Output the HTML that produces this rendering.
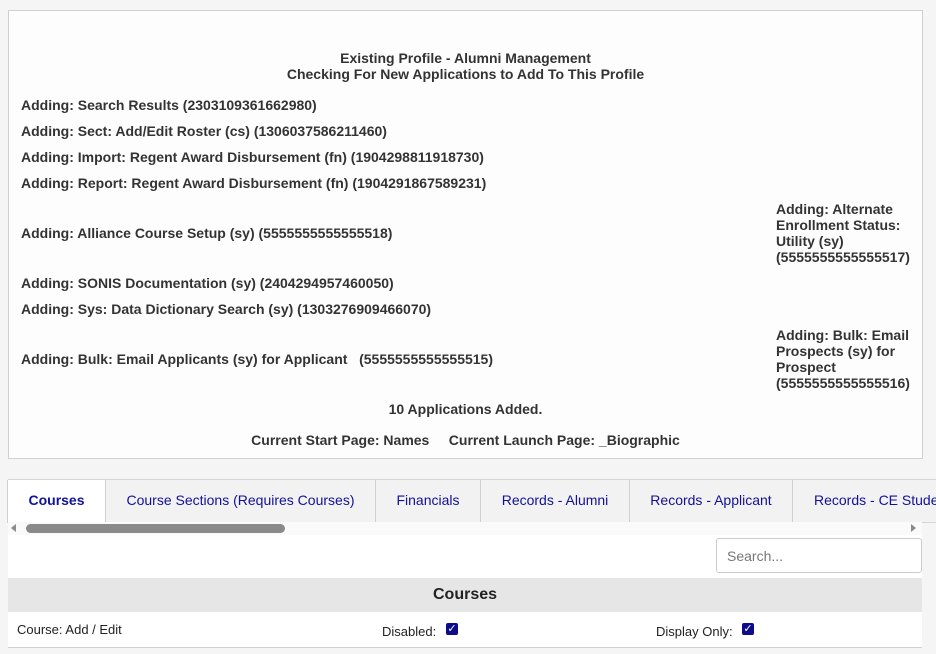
<!DOCTYPE html>
<html><head><style>
body{margin:0;background:#f5f5f5;font-family:"Liberation Sans",Arial,sans-serif;width:936px;height:654px;overflow:hidden;position:relative}
.p{position:absolute;left:8px;top:10px;width:913px;height:447px;background:#fdfdfd;border:1px solid #d0d0d0}
.t{position:absolute;font-size:14px;font-weight:bold;color:#333;line-height:16px;white-space:nowrap;margin-top:-1px}
.c{left:0;width:913px;text-align:center}
.tabs{position:absolute;left:8px;top:479px;width:928px;height:42px;border-top:1px solid #d5d5d5;border-bottom:1px solid #d5d5d5;background:#f2f2f2}
.tab{position:absolute;top:0;height:42px;line-height:41px;font-size:14px;text-align:center;border-right:1px solid #d0d0d0;white-space:nowrap;overflow:hidden;color:#11119a}
</style></head><body>
<div class="p">
<div class="t c" style="top:40px">Existing Profile - Alumni Management</div>
<div class="t c" style="top:56px">Checking For New Applications to Add To This Profile</div>
<div class="t" style="left:12px;top:87px">Adding: Search Results (2303109361662980)</div>
<div class="t" style="left:12px;top:113px">Adding: Sect: Add/Edit Roster (cs) (1306037586211460)</div>
<div class="t" style="left:12px;top:139px">Adding: Import: Regent Award Disbursement (fn) (1904298811918730)</div>
<div class="t" style="left:12px;top:165px">Adding: Report: Regent Award Disbursement (fn) (1904291867589231)</div>
<div class="t" style="left:12px;top:215px">Adding: Alliance Course Setup (sy) (5555555555555518)</div>
<div class="t" style="left:767px;top:191px">Adding: Alternate<br>Enrollment Status:<br>Utility (sy)<br>(5555555555555517)</div>
<div class="t" style="left:12px;top:265px">Adding: SONIS Documentation (sy) (2404294957460050)</div>
<div class="t" style="left:12px;top:291px">Adding: Sys: Data Dictionary Search (sy) (1303276909466070)</div>
<div class="t" style="left:12px;top:341px">Adding: Bulk: Email Applicants (sy) for Applicant &nbsp; (5555555555555515)</div>
<div class="t" style="left:767px;top:317px">Adding: Bulk: Email<br>Prospects (sy) for<br>Prospect<br>(5555555555555516)</div>
<div class="t c" style="top:391px">10 Applications Added.</div>
<div class="t c" style="top:422px">Current Start Page: Names &nbsp;&nbsp;&nbsp; Current Launch Page: _Biographic</div>
</div>
<div class="tabs">
<div class="tab" style="left:0;width:97px;background:#fff;height:43px;font-weight:bold;border-left:1px solid #d0d0d0;margin-left:-1px">Courses</div>
<div class="tab" style="left:98px;width:269px">Course Sections (Requires Courses)</div>
<div class="tab" style="left:368px;width:104px">Financials</div>
<div class="tab" style="left:473px;width:148px">Records - Alumni</div>
<div class="tab" style="left:622px;width:162px">Records - Applicant</div>
<div class="tab" style="left:785px;width:160px;text-align:left;padding-left:21px;border:none">Records - CE Students</div>
</div>
<div style="position:absolute;left:8px;top:522px;width:914px;height:13px;background:#fafafa"></div>
<div style="position:absolute;left:26px;top:524px;width:259px;height:9px;border-radius:5px;background:#8a8a8a"></div>
<div style="position:absolute;left:11px;top:524px;width:0;height:0;border-top:4px solid transparent;border-bottom:4px solid transparent;border-right:5px solid #8a8a8a"></div>
<div style="position:absolute;left:911px;top:524px;width:0;height:0;border-top:4px solid transparent;border-bottom:4px solid transparent;border-left:5px solid #8a8a8a"></div>
<div style="position:absolute;left:8px;top:535px;width:914px;height:113px;background:#fff"></div>
<div style="position:absolute;left:716px;top:538px;border:1px solid #ccc;border-radius:3px;background:#fff;font-size:14px;color:#777;line-height:34px;box-sizing:border-box;padding-left:10px;height:35px;width:206px">Search...</div>
<div style="position:absolute;left:8px;top:578px;width:914px;height:34px;background:#e6e6e6;text-align:center;font-size:16px;font-weight:bold;line-height:33px;color:#222">Courses</div>
<div style="position:absolute;left:8px;top:647px;width:914px;height:1px;background:#d0d0d0"></div>
<div style="position:absolute;left:17px;top:622px;font-size:13px;color:#222">Course: Add / Edit</div>
<div style="position:absolute;left:382px;top:624px;font-size:13px;color:#222">Disabled:</div>
<div style="position:absolute;left:446px;top:623px;width:12px;height:12px;background:#0d0d8c;border-radius:2px;color:#fff;font-size:11px;line-height:12px;text-align:center">✓</div>
<div style="position:absolute;left:656px;top:624px;font-size:13px;color:#222">Display Only:</div>
<div style="position:absolute;left:742px;top:623px;width:12px;height:12px;background:#0d0d8c;border-radius:2px;color:#fff;font-size:11px;line-height:12px;text-align:center">✓</div>
</body></html>
